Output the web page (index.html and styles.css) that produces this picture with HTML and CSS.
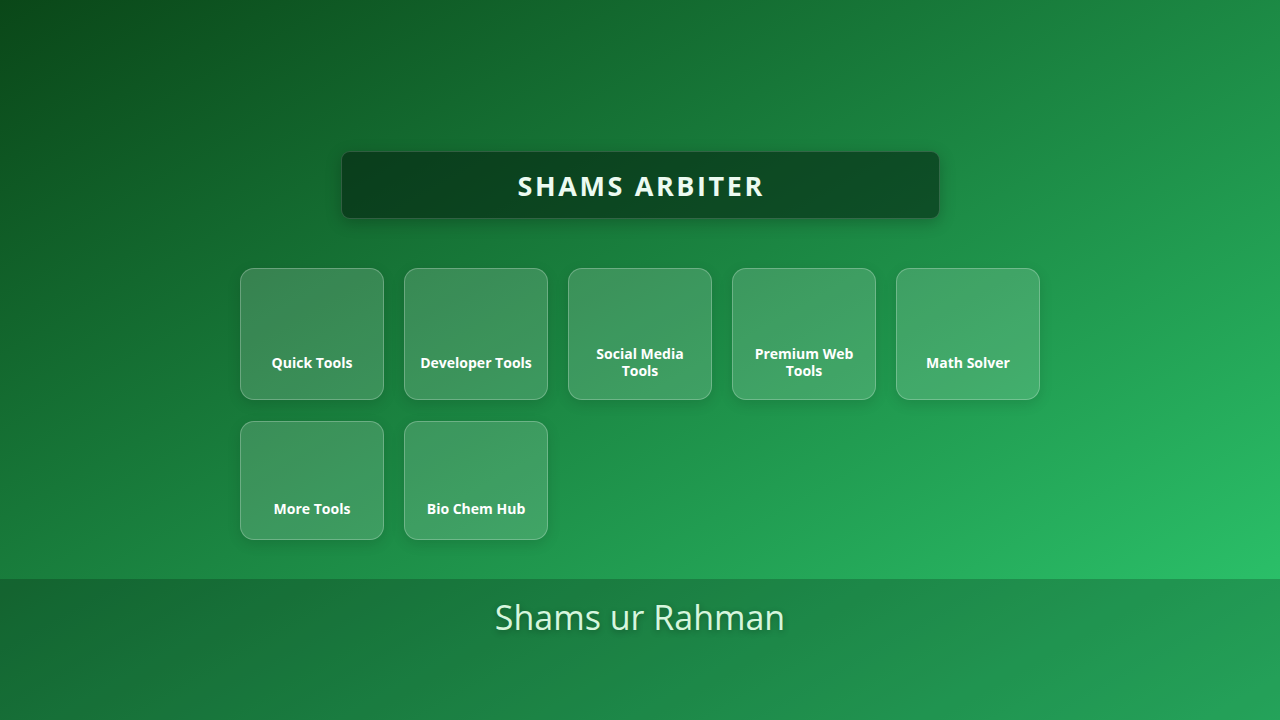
FILE: index.html
```html
<!DOCTYPE html>
<html lang="en">
<head>
<meta charset="utf-8">
<title>Shams Arbiter</title>
<link rel="stylesheet" href="styles.css">
</head>
<body>
  <main class="main">
    <header class="title-box">
      <h1 class="title">SHAMS ARBITER</h1>
    </header>
    <nav class="grid">
      <a class="card" href="#"><span class="icon"></span><span class="label">Quick Tools</span></a>
      <a class="card" href="#"><span class="icon"></span><span class="label">Developer Tools</span></a>
      <a class="card" href="#"><span class="icon"></span><span class="label">Social Media Tools</span></a>
      <a class="card" href="#"><span class="icon"></span><span class="label">Premium Web Tools</span></a>
      <a class="card" href="#"><span class="icon"></span><span class="label">Math Solver</span></a>
      <a class="card" href="#"><span class="icon"></span><span class="label">More Tools</span></a>
      <a class="card" href="#"><span class="icon"></span><span class="label">Bio Chem Hub</span></a>
    </nav>
  </main>
  <footer class="footer">
    <p class="author">Shams ur Rahman</p>
  </footer>
</body>
</html>
```

FILE: styles.css
```css
* { box-sizing: border-box; }

html, body {
  margin: 0;
  padding: 0;
}

body {
  height: 100vh;
  display: flex;
  flex-direction: column;
  font-family: "Open Sans", "Liberation Sans", sans-serif;
  background: linear-gradient(to bottom right, #0a4718, #2ecc71);
  color: #fff;
  overflow: hidden;
}

.main {
  flex: none;
  display: flex;
  flex-direction: column;
  align-items: center;
  padding-top: 151px;
}

.title-box {
  width: 599px;
  height: 68px;
  display: flex;
  align-items: center;
  justify-content: center;
  background: rgba(2, 24, 12, 0.52);
  border: 1px solid rgba(255, 255, 255, 0.16);
  border-radius: 9px;
  box-shadow: 0 4px 16px rgba(0, 0, 0, 0.22);
}

.title {
  margin: 0;
  font-size: 27px;
  font-weight: 700;
  letter-spacing: 2.6px;
  color: #ecfbf1;
  line-height: 1;
  padding-left: 2.6px;
}

.grid {
  margin-top: 49px;
  display: grid;
  grid-template-columns: repeat(5, 144px);
  column-gap: 20px;
  row-gap: 21px;
}

.card {
  min-height: 119px;
  padding: 20px 12px;
  display: flex;
  flex-direction: column;
  align-items: center;
  justify-content: center;
  text-decoration: none;
  background: rgba(255, 255, 255, 0.15);
  border: 1px solid rgba(255, 255, 255, 0.25);
  border-radius: 14px;
  box-shadow: 0 4px 14px rgba(0, 0, 0, 0.12);
}

.icon {
  display: block;
  height: 46px;
  margin-bottom: 10px;
}

.label {
  display: block;
  font-size: 14px;
  font-weight: 700;
  line-height: 17px;
  color: #ffffff;
  text-align: center;
}

.footer {
  flex: 1;
  margin-top: 39px;
  background: rgba(0, 0, 0, 0.2);
  display: flex;
  justify-content: center;
  padding-top: 15px;
}

.author {
  margin: 0;
  font-size: 34px;
  font-weight: 400;
  line-height: 46px;
  color: #d6f6de;
  text-shadow: 0 2px 6px rgba(0, 0, 0, 0.3);
}
```
